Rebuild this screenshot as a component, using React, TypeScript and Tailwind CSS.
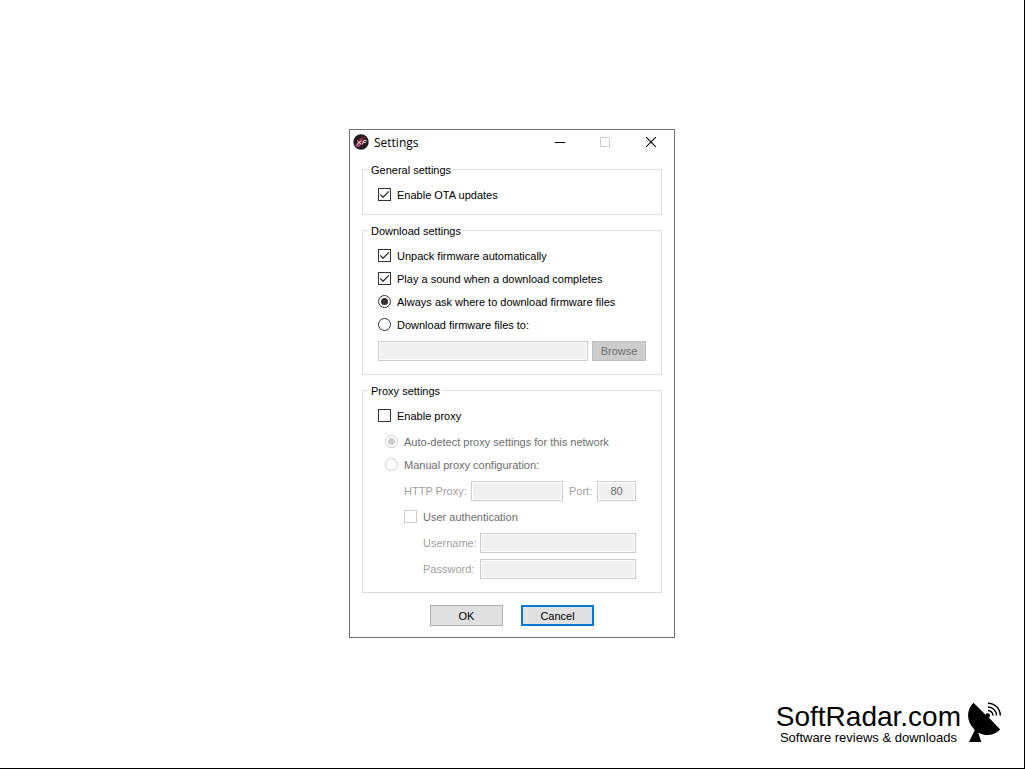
import { useState } from "react";
import type { InputHTMLAttributes, ReactNode } from "react";
import clsx from "clsx";

function Group({ title, children }: { title: string; children: ReactNode }) {
  return (
    <fieldset className="min-w-0 border border-[#dcdcdc] px-[15px] pt-[6px] text-black">
      <legend className="-ml-[9px] px-[2px] pt-[2px] leading-[13px]">{title}</legend>
      {children}
    </fieldset>
  );
}

type OptionProps = InputHTMLAttributes<HTMLInputElement> & { label: string };

function CheckOption({ label, className, ...props }: OptionProps) {
  return (
    <label className={clsx("flex h-[23px] items-center gap-[6px] has-disabled:text-[#6d6d6d]", className)}>
      <span className="relative flex">
        <input
          type="checkbox"
          className="peer size-[13px] appearance-none border border-[#333] bg-white disabled:border-[#ccc]"
          {...props}
        />
        <svg
          viewBox="0 0 13 13"
          className="pointer-events-none absolute inset-0 hidden size-[13px] peer-checked:block"
          fill="none"
          stroke="#333"
          strokeWidth="1.3"
        >
          <path d="M2.2 6.4l2.8 2.9 5.9-5.9" />
        </svg>
      </span>
      <span className="pt-[2px]">{label}</span>
    </label>
  );
}

function RadioOption({ label, className, ...props }: OptionProps) {
  return (
    <label className={clsx("flex h-[23px] items-center gap-[6px] has-disabled:text-[#6d6d6d]", className)}>
      <span className="relative flex">
        <input
          type="radio"
          className="peer size-[13px] appearance-none rounded-full border border-[#333] bg-white disabled:border-[#ccc]"
          {...props}
        />
        <span className="pointer-events-none absolute inset-[3px] hidden rounded-full bg-[#333] peer-checked:block peer-disabled:bg-[#ccc]" />
      </span>
      <span className="pt-[2px]">{label}</span>
    </label>
  );
}

function TextField({ className, ...props }: InputHTMLAttributes<HTMLInputElement>) {
  return (
    <input
      className={clsx(
        "h-5 min-w-0 border border-[#7a7a7a] bg-white px-1 inset-ring inset-ring-white disabled:border-[#ccc] disabled:bg-[#f0f0f0] disabled:text-[#6d6d6d]",
        className
      )}
      {...props}
    />
  );
}

function AppIcon() {
  return (
    <svg viewBox="0 0 16 16" className="size-4">
      <defs>
        <linearGradient id="streak" x1="0" y1="1" x2="1" y2="0">
          <stop offset="0" stopColor="#5a5fb8" />
          <stop offset="0.4" stopColor="#c8324a" />
          <stop offset="1" stopColor="#3a2228" />
        </linearGradient>
      </defs>
      <circle cx="8" cy="8" r="7.7" fill="#231c20" />
      <path d="M2 12L8.5 3l4.5-.5L6 13.5z" fill="url(#streak)" />
      <path d="M4.2 6.6l4 3.8M8.4 6.4l-4.6 4.2M9.2 10.6l1.5-4h3M10.2 8.5h2.6" stroke="#e8e0e2" strokeWidth="1" fill="none" />
    </svg>
  );
}

function DishIcon() {
  return (
    <svg viewBox="0 0 34 41" className="mb-[2px] h-[41px] w-[34px]">
      <path d="M5.5.8C-2 8-1.5 19 5.5 26.5 12 34.5 24 35.5 32.2 27.4L20.8 15.5l-2.7-2.2z" />
      <path d="M7 27.5L1 40h12.3L10 30z" />
      <circle cx="19.7" cy="13.5" r="2.3" />
      <g fill="none" stroke="#000" strokeWidth="1.5">
        <path d="M20 8.5a5 5 0 0 1 5 5" />
        <path d="M20 5a8.5 8.5 0 0 1 8.5 8.5" />
        <path d="M20 1.2a12.3 12.3 0 0 1 12.3 12.3" />
      </g>
    </svg>
  );
}

export default function App() {
  const [target, setTarget] = useState("ask");
  const [proxy, setProxy] = useState(false);

  return (
    <div className="relative flex min-h-screen items-center justify-center border-r border-b border-black bg-white pb-px font-['Liberation_Sans',Arial,sans-serif] text-[11px] leading-[15px] text-black">
      <main className="w-[326px] border border-[#707070] bg-white">
        <header className="flex h-6 items-center pl-[3px]">
          <AppIcon />
          <h1 className="ml-[5px] flex-1 font-['Open_Sans','Noto_Sans',sans-serif] text-[12px]">Settings</h1>
          <button aria-label="Minimize" className="flex h-6 w-[45px] items-center justify-center">
            <svg viewBox="0 0 10 10" className="size-[10px]">
              <path d="M0 5.5h10" stroke="#000" />
            </svg>
          </button>
          <button aria-label="Maximize" disabled className="flex h-6 w-[46px] items-center justify-center">
            <svg viewBox="0 0 10 10" className="size-[10px]">
              <path d="M.5.5h9v9h-9z" stroke="#ccc" fill="none" />
            </svg>
          </button>
          <button aria-label="Close" className="flex h-6 w-[46px] items-center justify-center">
            <svg viewBox="0 0 10 10" className="size-[10px]">
              <path d="M0 0l10 10M10 0L0 10" stroke="#000" strokeWidth="1.1" />
            </svg>
          </button>
        </header>

        <form className="flex flex-col gap-2 px-3 pt-2 pb-[11px]" onSubmit={(e) => e.preventDefault()}>
          <Group title="General settings">
            <CheckOption label="Enable OTA updates" defaultChecked className="mb-2" />
          </Group>

          <Group title="Download settings">
            <CheckOption label="Unpack firmware automatically" defaultChecked />
            <CheckOption label="Play a sound when a download completes" defaultChecked />
            <RadioOption
              label="Always ask where to download firmware files"
              name="target"
              checked={target === "ask"}
              onChange={() => setTarget("ask")}
            />
            <RadioOption
              label="Download firmware files to:"
              name="target"
              checked={target === "folder"}
              onChange={() => setTarget("folder")}
            />
            <div className="mt-[5px] mb-[13px] flex gap-1">
              <TextField aria-label="Download folder" disabled={target === "ask"} className="flex-1" />
              <button
                type="button"
                disabled={target === "ask"}
                className="h-5 w-[54px] border border-[#adadad] bg-[#e1e1e1] disabled:border-[#bfbfbf] disabled:bg-[#ccc] disabled:text-[#6d6d6d]"
              >
                Browse
              </button>
            </div>
          </Group>

          <Group title="Proxy settings">
            <CheckOption label="Enable proxy" checked={proxy} onChange={(e) => setProxy(e.target.checked)} />
            <div className="mt-[3px] mb-[13px] pr-[10px] pl-[7px]">
              <RadioOption label="Auto-detect proxy settings for this network" name="proxy" defaultChecked disabled={!proxy} />
              <RadioOption label="Manual proxy configuration:" name="proxy" disabled={!proxy} />
              <div className="mt-[5px] pl-[19px]">
                <div className="flex items-center text-[#a0a0a0]">
                  <label htmlFor="host" className="w-[67px]">HTTP Proxy:</label>
                  <TextField id="host" disabled={!proxy} className="flex-1" />
                  <label htmlFor="port" className="ml-[6px] w-7">Port:</label>
                  <TextField id="port" defaultValue="80" disabled={!proxy} className="w-[39px] text-center" />
                </div>
                <CheckOption label="User authentication" disabled={!proxy} className="mt-1" />
                <div className="mt-[5px] flex flex-col gap-[6px] pl-[19px] text-[#a0a0a0]">
                  <div className="flex items-center">
                    <label htmlFor="user" className="w-[57px]">Username:</label>
                    <TextField id="user" disabled={!proxy} className="flex-1" />
                  </div>
                  <div className="flex items-center">
                    <label htmlFor="pass" className="w-[57px]">Password:</label>
                    <TextField id="pass" type="password" disabled={!proxy} className="flex-1" />
                  </div>
                </div>
              </div>
            </div>
          </Group>

          <div className="mt-1 flex justify-center gap-[18px]">
            <button type="submit" className="h-[21px] w-[73px] border border-[#adadad] bg-[#e1e1e1] pt-px">
              OK
            </button>
            <button type="button" className="h-[21px] w-[73px] border-2 border-[#0078d7] bg-[#e1e1e1] pt-px">
              Cancel
            </button>
          </div>
        </form>
      </main>

      <a href="#" className="absolute right-[22px] bottom-[23px] flex items-end gap-[7px]">
        <span className="flex flex-col text-center">
          <span className="text-[28px] leading-[28px]">SoftRadar.com</span>
          <span className="text-[13px] leading-[14px]">Software reviews &amp; downloads</span>
        </span>
        <DishIcon />
      </a>
    </div>
  );
}
